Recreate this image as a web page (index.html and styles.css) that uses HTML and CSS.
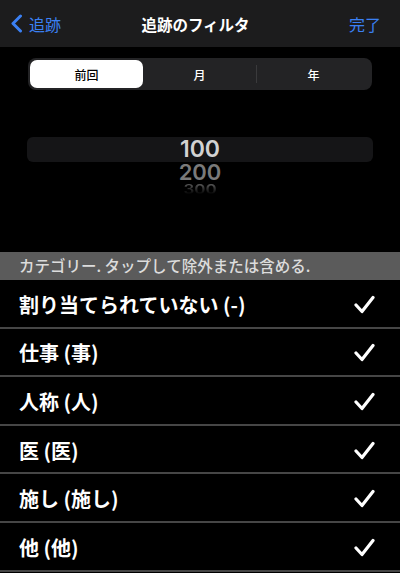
FILE: index.html
```html
<html>
    <head>
        <title>追跡のフィルタ</title>
        <meta charset="utf-8">
        <link rel="stylesheet" href="styles.css">
    </head>
    <body>
        <div class="navbar">
            <div class="back">
                <svg width="13" height="19" viewBox="0 0 13 19"><path d="M10.5 2 L3 9.5 L10.5 17" fill="none" stroke="#3b80f3" stroke-width="3" stroke-linecap="round" stroke-linejoin="round"/></svg>
                <span>追跡</span>
            </div>
            <div class="title">追跡のフィルタ</div>
            <div class="done">完了</div>
        </div>

        <div class="segments">
            <div class="segment selected">前回</div>
            <div class="segment">月</div>
            <div class="segment divided">年</div>
        </div>

        <div class="picker">
            <div class="band">100</div>
            <div class="pick next">200</div>
            <div class="pick far">300</div>
        </div>

        <div class="sectionHeader">カテゴリー. タップして除外または含める.</div>

        <div class="list">
            <div class="row"><span>割り当てられていない (-)</span><svg class="check" width="21" height="19" viewBox="0 0 21 19"><path d="M2 10 L8 16.5 L19 2.5" fill="none" stroke="#fff" stroke-width="3.2" stroke-linecap="round" stroke-linejoin="round"/></svg></div>
            <div class="row"><span>仕事 (事)</span><svg class="check" width="21" height="19" viewBox="0 0 21 19"><path d="M2 10 L8 16.5 L19 2.5" fill="none" stroke="#fff" stroke-width="3.2" stroke-linecap="round" stroke-linejoin="round"/></svg></div>
            <div class="row"><span>人称 (人)</span><svg class="check" width="21" height="19" viewBox="0 0 21 19"><path d="M2 10 L8 16.5 L19 2.5" fill="none" stroke="#fff" stroke-width="3.2" stroke-linecap="round" stroke-linejoin="round"/></svg></div>
            <div class="row"><span>医 (医)</span><svg class="check" width="21" height="19" viewBox="0 0 21 19"><path d="M2 10 L8 16.5 L19 2.5" fill="none" stroke="#fff" stroke-width="3.2" stroke-linecap="round" stroke-linejoin="round"/></svg></div>
            <div class="row"><span>施し (施し)</span><svg class="check" width="21" height="19" viewBox="0 0 21 19"><path d="M2 10 L8 16.5 L19 2.5" fill="none" stroke="#fff" stroke-width="3.2" stroke-linecap="round" stroke-linejoin="round"/></svg></div>
            <div class="row"><span>他 (他)</span><svg class="check" width="21" height="19" viewBox="0 0 21 19"><path d="M2 10 L8 16.5 L19 2.5" fill="none" stroke="#fff" stroke-width="3.2" stroke-linecap="round" stroke-linejoin="round"/></svg></div>
        </div>
    </body>
</html>
```

FILE: styles.css
```css
body {
    margin: 0;
    background-color: #000;
    color: #fff;
    font-family: "Noto Sans CJK JP", "Noto Sans", sans-serif;
    overflow: hidden;
}

.navbar {
    height: 47px;
    background-color: #1c1c1d;
    display: flex;
    align-items: center;
    justify-content: space-between;
    padding: 0 19px 0 10px;
}

.back {
    display: flex;
    align-items: center;
    gap: 6px;
    color: #3b80f3;
    font-size: 16px;
    width: 90px;
}

.title {
    font-size: 15.5px;
    font-weight: bold;
}

.done {
    color: #3b80f3;
    font-size: 16px;
    width: 90px;
    text-align: right;
}

.segments {
    margin: 11px 28px 0 28px;
    height: 32px;
    box-sizing: border-box;
    padding: 2px;
    background-color: #232325;
    border-radius: 8px;
    display: flex;
}

.segment {
    flex: 1;
    display: flex;
    align-items: center;
    justify-content: center;
    font-size: 12px;
    font-weight: 500;
    color: #fff;
}

.segment.selected {
    background-color: #fff;
    color: #000;
    border-radius: 7px;
}

.segment.divided {
    border-left: 1px solid #3a3a3c;
    margin: 5px 0;
}

.picker {
    height: 162px;
    box-sizing: border-box;
    padding-top: 47px;
    text-align: center;
    font-family: "Inter", "Noto Sans", sans-serif;
    font-weight: 600;
}

.band {
    margin: 0 27px;
    height: 25px;
    line-height: 25px;
    border-radius: 6px;
    background-color: #151517;
    color: #d2d2d2;
    font-size: 23px;
}

.pick.next {
    height: 20px;
    line-height: 20px;
    font-size: 22px;
    color: #7a7a7a;
}

.pick.far {
    height: 14px;
    line-height: 14px;
    font-size: 17px;
    color: #5a5a5a;
    transform: scaleY(0.75);
    -webkit-mask-image: linear-gradient(#000, transparent);
}

.sectionHeader {
    height: 28px;
    line-height: 27px;
    background-color: #5b5b5b;
    color: #dcdcdc;
    font-size: 15.5px;
    font-weight: 500;
    padding-left: 19px;
}

.row {
    height: 48.6px;
    box-sizing: border-box;
    border-bottom: 2px solid #464646;
    display: flex;
    align-items: center;
    justify-content: space-between;
    padding: 2px 25px 0 19px;
    font-size: 20px;
    font-weight: bold;
}

.check {
    display: block;
}
```
